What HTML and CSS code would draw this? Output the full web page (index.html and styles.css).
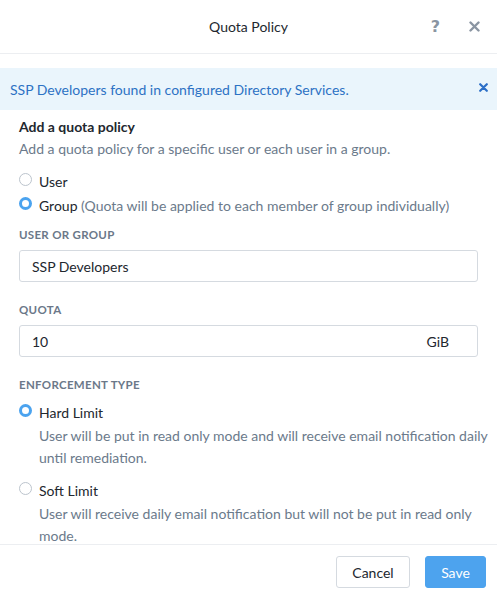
FILE: index.html
```html
<!DOCTYPE html>
<html>
<head>
<meta charset="utf-8">
<link rel="stylesheet" href="styles.css">
</head>
<body>
<div class="dialog">
  <header class="header">
    <div class="spacer"></div>
    <h1 class="title">Quota Policy</h1>
    <div class="actions">
      <span class="help">?</span>
      <svg class="close" width="11" height="11" viewBox="0 0 11 11"><path d="M1.5 1.5 L9.5 9.5 M9.5 1.5 L1.5 9.5" stroke="#8a95a2" stroke-width="2.4" stroke-linecap="round"/></svg>
    </div>
  </header>
  <main class="body">
    <div class="alert">
      <span class="alert-text">SSP Developers found in configured Directory Services.</span>
      <svg class="alert-close" width="9" height="9" viewBox="0 0 9 9"><path d="M1.2 1.2 L7.8 7.8 M7.8 1.2 L1.2 7.8" stroke="#2c6fc7" stroke-width="2.2" stroke-linecap="round"/></svg>
    </div>
    <div class="content">
      <h2 class="section-title">Add a quota policy</h2>
      <p class="section-sub">Add a quota policy for a specific user or each user in a group.</p>
      <div class="radios">
        <div class="radio-row"><span class="radio"></span><span class="radio-label">User</span></div>
        <div class="radio-row"><span class="radio checked"></span><span class="radio-label">Group <span class="muted">(Quota will be applied to each member of group individually)</span></span></div>
      </div>
      <div class="field-label first">USER OR GROUP</div>
      <div class="input"><span>SSP Developers</span></div>
      <div class="field-label">QUOTA</div>
      <div class="input"><span>10</span><span class="unit">GiB</span></div>
      <div class="field-label">ENFORCEMENT TYPE</div>
      <div class="option">
        <div class="radio-row"><span class="radio checked"></span><span class="radio-label">Hard Limit</span></div>
        <p class="option-desc">User will be put in read only mode and will receive email notification daily until remediation.</p>
      </div>
      <div class="option second">
        <div class="radio-row"><span class="radio"></span><span class="radio-label">Soft Limit</span></div>
        <p class="option-desc">User will receive daily email notification but will not be put in read only mode.</p>
      </div>
    </div>
  </main>
  <footer class="footer">
    <button class="btn btn-cancel">Cancel</button>
    <button class="btn btn-save">Save</button>
  </footer>
</div>
</body>
</html>
```
FILE: styles.css
```css
* { box-sizing: border-box; }
html, body { margin: 0; padding: 0; }
body {
  font-family: Lato, "Liberation Sans", sans-serif;
  font-size: 14px;
  color: #22272e;
  background: #fff;
}
.dialog {
  width: 497px;
  height: 596px;
  display: flex;
  flex-direction: column;
  overflow: hidden;
  border-radius: 4px;
  background: #fff;
}
.header {
  height: 54px;
  flex: none;
  border-bottom: 1px solid #eceef1;
  display: grid;
  grid-template-columns: 1fr auto 1fr;
  align-items: center;
}
.title {
  margin: 0;
  font-size: 14px;
  font-weight: 400;
  line-height: 20px;
  color: #22272e;
}
.actions {
  display: flex;
  justify-content: flex-end;
  align-items: center;
  padding-right: 17px;
  gap: 29px;
}
.help {
  font-family: "DejaVu Sans", sans-serif;
  font-weight: 700;
  font-size: 16px;
  color: #8a95a2;
  line-height: 20px;
}
.close { display: block; }
.body {
  flex: 1;
  overflow: hidden;
  padding-top: 14px;
}
.alert {
  height: 42px;
  background: #eaf5fc;
  display: flex;
  align-items: center;
  justify-content: space-between;
  padding: 0 9px 0 10px;
}
.alert-text {
  color: #2d72c4;
  font-size: 14px;
}
.alert-close { display: block; margin-top: -3px; }
.content {
  padding: 0 19px;
}
.section-title {
  margin: 7px 0 0;
  font-size: 14px;
  font-weight: 700;
  line-height: 20px;
  color: #22272e;
}
.section-sub {
  margin: 1px 0 0;
  line-height: 22px;
  color: #6b7a8b;
}
.radios { margin-top: 10px; }
.radio-row {
  display: flex;
  align-items: flex-start;
  line-height: 24px;
}
.radio {
  flex: none;
  width: 13px;
  height: 13px;
  border-radius: 50%;
  border: 1px solid #bcc4cd;
  margin-top: 3px;
  margin-right: 7px;
  background: #fff;
}
.radio.checked {
  border: 3.5px solid #4ba3ef;
  background: #fff;
}
.muted { color: #6b7a8b; }
.field-label {
  margin-top: 20px;
  font-size: 11.5px;
  font-weight: 700;
  line-height: 16px;
  color: #6b7889;
  letter-spacing: 0.3px;
}
.field-label.first { margin-top: 9px; }
.input {
  margin-top: 7px;
  height: 32px;
  border: 1px solid #d5dae0;
  border-radius: 3px;
  display: flex;
  align-items: center;
  justify-content: space-between;
  padding: 0 28px 0 12px;
  color: #22272e;
}
.option { margin-top: 8px; }
.option.second { margin-top: 10px; }
.option-desc {
  margin: 0 -10px 0 20px;
  line-height: 22px;
  color: #6b7a8b;
}
.footer {
  height: 52px;
  flex: none;
  border-top: 1px solid #eceef1;
  display: flex;
  justify-content: flex-end;
  align-items: flex-start;
  padding: 11px 11px 0 0;
  gap: 15px;
}
.btn {
  height: 32px;
  border-radius: 3px;
  font-family: Lato, "Liberation Sans", sans-serif;
  font-size: 14px;
  padding: 0;
  cursor: pointer;
}
.btn-cancel {
  width: 74px;
  background: #fff;
  border: 1px solid #d5dae0;
  color: #22272e;
}
.btn-save {
  width: 61px;
  background: #4da3ee;
  border: 1px solid #4da3ee;
  color: #fff;
}
```
